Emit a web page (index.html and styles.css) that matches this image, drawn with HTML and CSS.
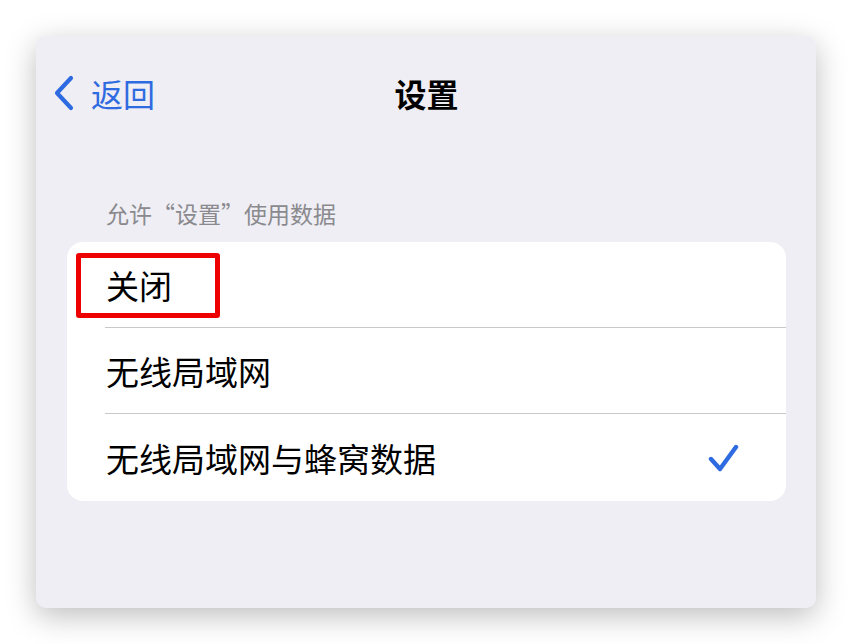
FILE: index.html
```html
<!DOCTYPE html>
<html>
	<head>
		<meta charset="UTF-8">
		<title>设置</title>
		<link rel="stylesheet" href="styles.css">
	</head>
	<body>
		<div class="panel">
			<div class="nav">
				<a class="back" href="#">
					<svg class="chevron" width="22" height="36" viewBox="0 0 22 36">
						<path d="M18 3 L4 18 L18 33" fill="none" stroke="#2f6be0" stroke-width="4.2" stroke-linecap="round" stroke-linejoin="round"/>
					</svg>
					<span>返回</span>
				</a>
				<div class="title">设置</div>
			</div>

			<div class="section-head">允许“设置”使用数据</div>
			<ul class="list">
				<li class="row">
					<div class="row-inner">关闭</div>
					<div class="mark"></div>
				</li>
				<li class="row">
					<div class="row-inner">无线局域网</div>
				</li>
				<li class="row">
					<div class="row-inner">
						<span>无线局域网与蜂窝数据</span>
						<svg class="check" width="32" height="32" viewBox="0 0 32 32">
							<path d="M4 17 L13 27 L29 5" fill="none" stroke="#2f6be0" stroke-width="4.4" stroke-linecap="round" stroke-linejoin="round"/>
						</svg>
					</div>
				</li>
			</ul>
		</div>
	</body>
</html>
```

FILE: styles.css
```css
*{
	margin: 0;
	padding: 0;
	box-sizing: border-box;
}
html, body{
	height: 100%;
}
body{
	background: #fff;
	font-family: "Noto Sans CJK SC", "Noto Sans", sans-serif;
	padding-top: 36px;
}
.panel{
	width: 780px;
	height: 572px;
	margin-left: 36px;
	background: #efeef4;
	border-radius: 10px;
	box-shadow: 0 8px 30px rgba(0,0,0,0.26);
	padding: 0 30px 0 31px;
}
.nav{
	height: 114px;
	display: flex;
	align-items: center;
	position: relative;
}
.back{
	display: flex;
	align-items: center;
	gap: 16px;
	color: #2f6be0;
	text-decoration: none;
	font-size: 32px;
	margin-left: -14px;
}
.title{
	position: absolute;
	left: 0;
	right: 0;
	text-align: center;
	font-size: 32px;
	font-weight: bold;
	color: #000;
	pointer-events: none;
}
.section-head{
	margin: 48px 0 14px 39px;
	font-size: 23px;
	line-height: 30px;
	color: #8a8a8e;
}
.list{
	list-style: none;
	background: #fff;
	border-radius: 16px;
	position: relative;
}
.row{
	padding-left: 38px;
	position: relative;
}
.row-inner{
	height: 86px;
	display: flex;
	align-items: center;
	justify-content: space-between;
	padding: 0 47px 0 1px;
	border-bottom: 1px solid #c8c7cc;
	font-size: 33px;
	color: #000;
}
.row:last-child .row-inner{
	border-bottom: none;
	height: 87px;
}
.mark{
	position: absolute;
	left: 9px;
	top: 11px;
	width: 144px;
	height: 65px;
	border: 5px solid #ee0000;
	border-radius: 3px;
}
```
